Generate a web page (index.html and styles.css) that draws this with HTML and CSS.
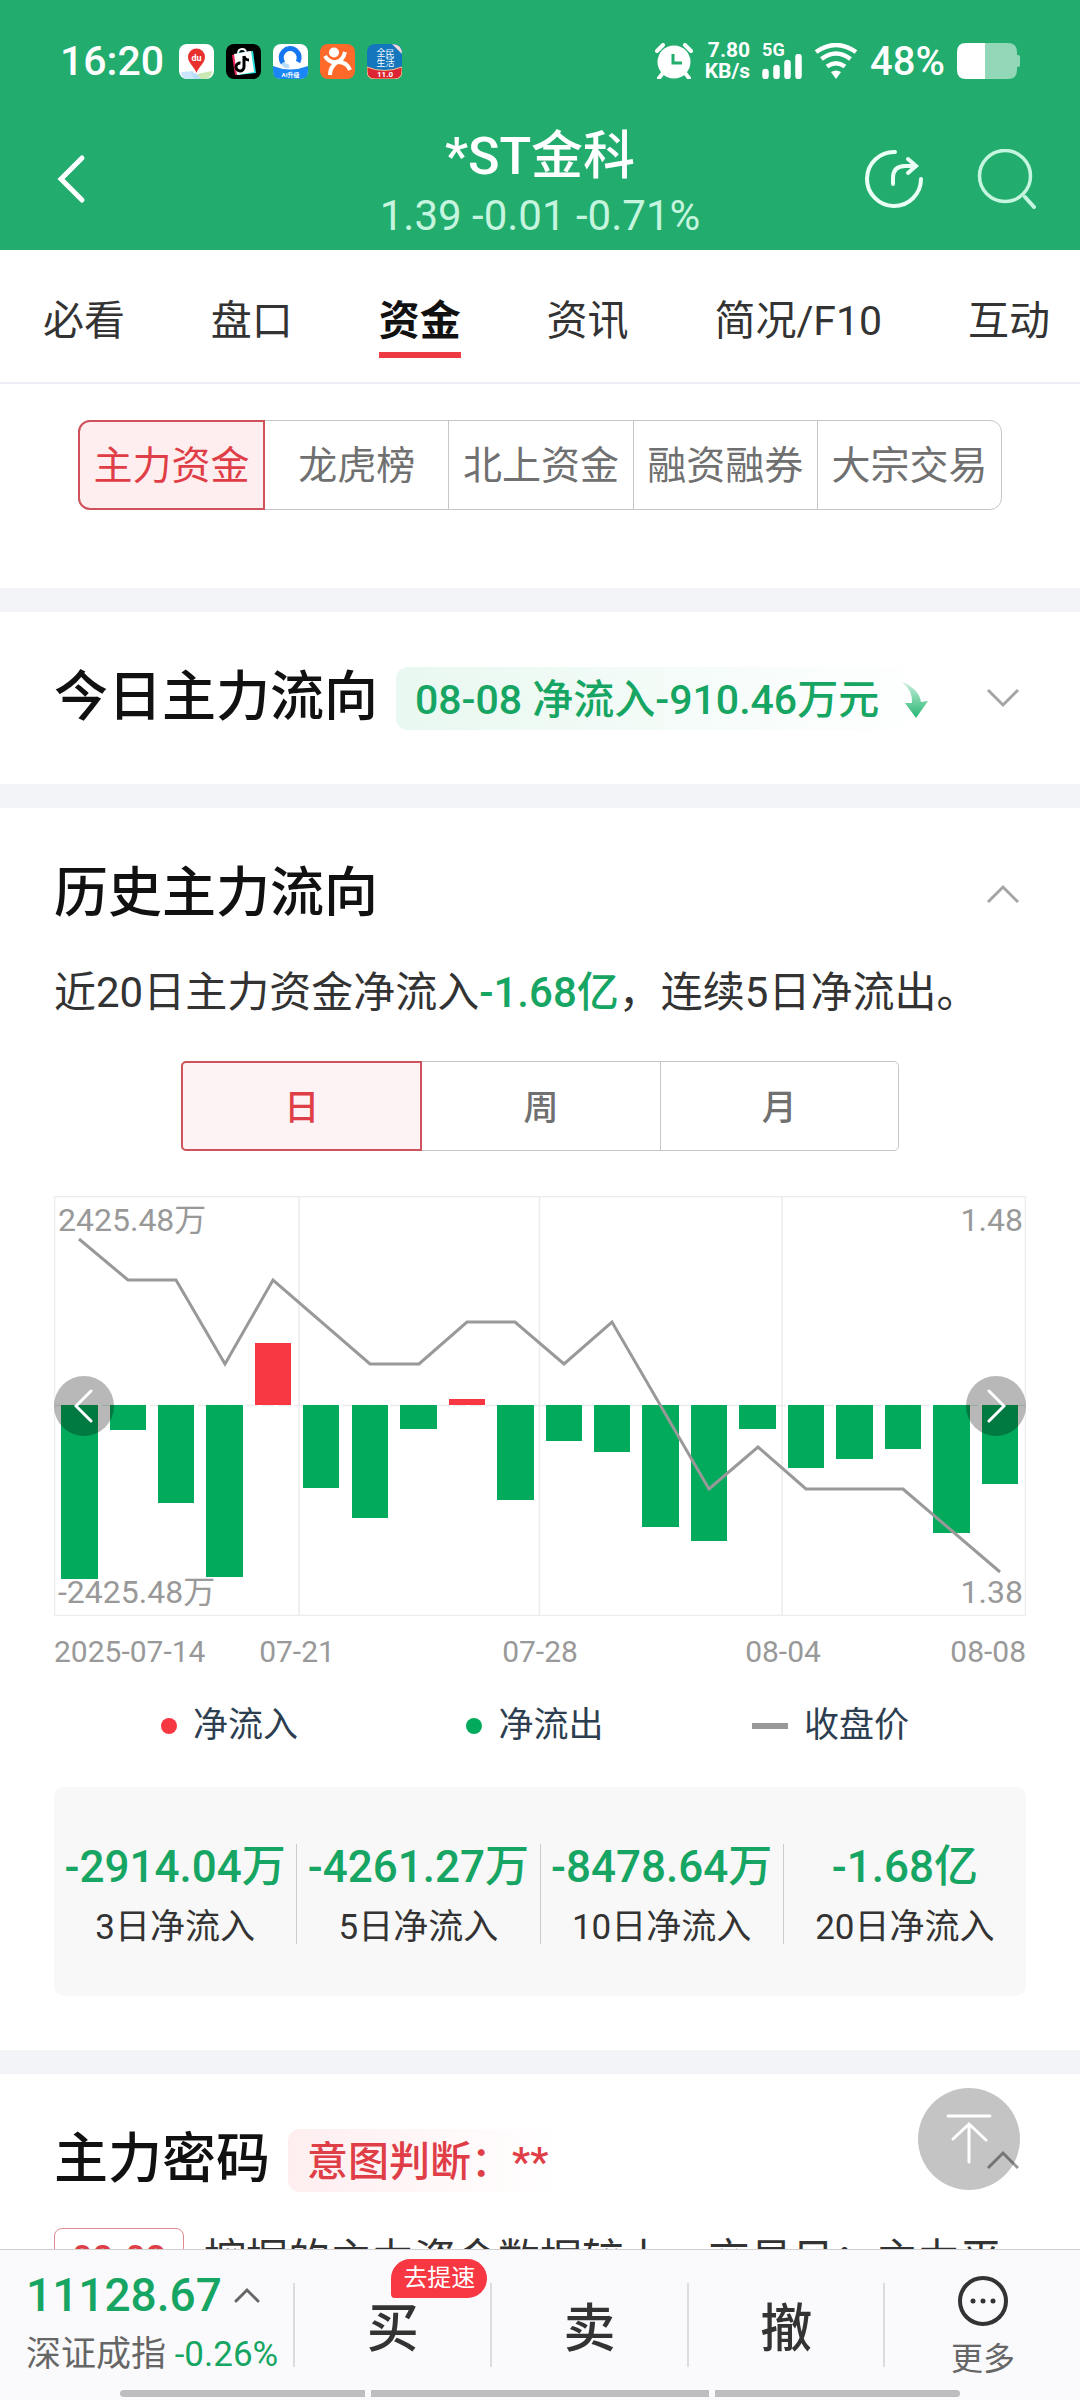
FILE: index.html
```html
<!DOCTYPE html>
<html lang="zh-CN">
<head>
  <meta charset="UTF-8">
  <meta name="viewport" content="width=device-width, initial-scale=1.0">
  <title>*ST金科 资金</title>
  <link rel="stylesheet" href="styles.css">
</head>
<body>
  <div class="app">
    <header class="top">
      <div class="status-bar">
        <span class="clock">16:20</span>
        <div class="notices">
          <svg class="app-icon" viewBox="0 0 35 35">
            <rect width="35" height="35" rx="8" fill="#fff"/>
            <path d="M2 28L14 27 17 35H8Q3 35 2 28Z" fill="#cbe6fa"/>
            <path d="M18 30L33 27Q33 33 27 35H21Z" fill="#c9e8b4"/>
            <path d="M12 28L18 30 22 35H15Z" fill="#b9dcf8"/>
            <path d="M17.500 29C15 22 9 19 9 13A8.500 8.500 0 0 1 26 13C26 19 20 22 17.500 29Z" fill="#e8302f"/>
            <text class="du" x="17.500" y="17" text-anchor="middle">du</text>
          </svg>
          <svg class="app-icon" viewBox="0 0 35 35">
            <rect width="35" height="35" rx="8" fill="#000"/>
            <path d="M12 10Q12 5 16 5T20 9" fill="none" stroke="#fff" stroke-width="2"/>
            <path d="M6 11L24 7 28 28 9 31Z" fill="#f4235c"/>
            <path d="M11 9L27 7 30 29 12 31Z" fill="#2be3e0"/>
            <path d="M8 10L25 7 28 28 11 31Z" fill="#fff"/>
            <path d="M18 12V23A4 4 0 1 1 14.500 19M18 12Q19 16 23 16" fill="none" stroke="#000" stroke-width="3"/>
          </svg>
          <svg class="app-icon" viewBox="0 0 35 35">
            <rect width="35" height="35" rx="8" fill="#fff"/>
            <path d="M0 22Q17 29 35 22V27Q35 35 27 35H8Q0 35 0 27Z" fill="#1b86f5"/>
            <path d="M10 19A9 9 0 1 1 25 18" fill="none" stroke="#1677ee" stroke-width="5"/>
            <path d="M10 19Q12 23 16 22" fill="none" stroke="#b8dcfd" stroke-width="4"/>
            <text class="tiny" x="17.500" y="33" text-anchor="middle">AI升级</text>
          </svg>
          <svg class="app-icon" viewBox="0 0 35 35">
            <rect width="35" height="35" rx="8" fill="#ff6a2b"/>
            <circle cx="14" cy="8.500" r="5" fill="#fff"/>
            <path d="M5 12Q9 19 16 18Q23 17 25 8M17 18Q10 23 10 31M18 18Q27 18 30 26" fill="none" stroke="#fff" stroke-width="4"/>
          </svg>
          <svg class="app-icon" viewBox="0 0 35 35">
            <rect width="35" height="35" rx="8" fill="#1477bd"/>
            <path d="M25 0Q35 0 35 10Z" fill="#f5dada"/>
            <path d="M0 23Q17 30 35 23V27Q35 35 27 35H8Q0 35 0 27Z" fill="#dc2433" stroke="#f6c58b"/>
            <text class="life" x="14" y="12" text-anchor="middle">全</text>
            <text class="life" x="14" y="22" text-anchor="middle">生</text>
            <text class="life" x="23" y="13" text-anchor="middle">民</text>
            <text class="life" x="23" y="22" text-anchor="middle">活</text>
            <text class="ver" x="18" y="33" text-anchor="middle">11.0</text>
          </svg>
        </div>
        <div class="signals">
          <svg width="38" height="36" viewBox="0 0 38 36">
            <circle cx="19" cy="19" r="16.500" fill="#fff"/>
            <path d="M2 8L8 2M36 8L30 2M8 30L4 35M30 30L34 35" stroke="#fff" stroke-width="4" stroke-linecap="round"/>
            <path d="M18 11V20H27" fill="none" stroke="#22ac6e" stroke-width="3"/>
          </svg>
          <div class="speed"><span>7.80</span><span>KB/s</span></div>
          <div class="cell">
            <span>5G</span>
            <svg width="40" height="25" viewBox="0 0 40 25">
              <path d="M3.500 18V22M14.500 14V22M25.500 9V22M36.500 3V22" stroke="#fff" stroke-width="6.500" stroke-linecap="round"/>
            </svg>
          </div>
          <svg width="44" height="36" viewBox="0 0 44 36">
            <path d="M2 9Q22 -5 42 9M7.500 16Q22 5 36.500 16M13 23.500Q22 17 31 23.500" fill="none" stroke="#fff" stroke-width="4.500"/>
            <path d="M17 29Q22 26 27 29L22 36Z" fill="#fff"/>
          </svg>
          <span class="percent">48%</span>
          <svg width="63" height="36" viewBox="0 0 63 36">
            <path d="M28 0H51Q60 0 60 9V12H61Q63 12 63 14V22Q63 24 61 24H60V27Q60 36 51 36H28Z" fill="#92d7b7"/>
            <path d="M28 0H9Q0 0 0 9V27Q0 36 9 36H28Z" fill="#fff"/>
          </svg>
        </div>
      </div>
      <div class="nav-bar">
        <div class="nav-side">
          <button class="icon-btn back" aria-label="返回">
            <svg width="30" height="52" viewBox="0 0 30 52"><path d="M26 5L5 26 26 47" fill="none" stroke="#fff" stroke-width="5" stroke-linecap="round"/></svg>
          </button>
        </div>
        <div class="stock">
          <h1>*ST金科</h1>
          <p>1.39 -0.01 -0.71%</p>
        </div>
        <div class="nav-side nav-actions">
          <button class="icon-btn" aria-label="分享">
            <svg width="60" height="60" viewBox="0 0 60 60">
              <path d="M31 3A27 27 0 1 0 57 30M29 35V29Q29 17 41 17H51M44 10L52 17 44 24" fill="none" stroke="#eafff5" stroke-width="4" stroke-linecap="round"/>
            </svg>
          </button>
          <button class="icon-btn" aria-label="搜索">
            <svg width="60" height="60" viewBox="0 0 60 60">
              <circle cx="29" cy="27" r="25.500" fill="none" stroke="#c5f5de" stroke-width="3.500"/>
              <path d="M49 48L58 58" stroke="#c5f5de" stroke-width="4" stroke-linecap="round"/>
            </svg>
          </button>
        </div>
      </div>
    </header>

    <nav class="tabs">
      <a href="#">必看</a>
      <a href="#">盘口</a>
      <a href="#" class="active">资金</a>
      <a href="#">资讯</a>
      <a href="#">简况/F10</a>
      <a href="#">互动</a>
    </nav>

    <main class="content">
      <section class="filters">
        <div class="segment">
          <button class="active">主力资金</button>
          <button>龙虎榜</button>
          <button>北上资金</button>
          <button>融资融券</button>
          <button>大宗交易</button>
        </div>
      </section>

      <section class="card">
        <div class="card-head">
          <h2>今日主力流向</h2>
          <span class="pill down">08-08 净流入-910.46万元
            <svg width="28" height="36" viewBox="0 0 28 36">
              <defs>
                <linearGradient id="fall" x1="0" y1="0" x2="0" y2="1">
                  <stop offset="0" stop-color="#c9efdb"/>
                  <stop offset="1" stop-color="#25b673"/>
                </linearGradient>
              </defs>
              <path d="M1 0Q18 7 20 20L27 19 15 36 4 21 11 21Q12 9 1 0Z" fill="url(#fall)"/>
            </svg>
          </span>
          <button class="toggle" aria-label="展开">
            <svg width="34" height="20" viewBox="0 0 34 20"><path d="M2 2L17 17 32 2"/></svg>
          </button>
        </div>
      </section>

      <section class="card history">
        <div class="card-head">
          <h2>历史主力流向</h2>
          <button class="toggle" aria-label="收起">
            <svg width="34" height="20" viewBox="0 0 34 20"><path d="M2 18L17 3 32 18"/></svg>
          </button>
        </div>
        <p class="summary">近20日主力资金净流入<strong>-1.68亿</strong>，连续5日净流出。</p>

        <div class="segment period">
          <button class="active">日</button>
          <button>周</button>
          <button>月</button>
        </div>

        <div class="chart">
          <svg class="plot" viewBox="0 0 972 420">
            <path class="grid" d="M.5 .5H971.500V419.500H.5ZM245 0V420M485.500 0V420M728 0V420"/>
            <path class="zero" d="M0 209.500H972"/>
            <g class="out">
              <rect x="7" y="209" width="37" height="174"/>
              <rect x="56" y="209" width="36" height="25"/>
              <rect x="104" y="209" width="36" height="98"/>
              <rect x="152" y="209" width="37" height="172"/>
              <rect x="249" y="209" width="36" height="83"/>
              <rect x="298" y="209" width="36" height="113"/>
              <rect x="346" y="209" width="37" height="24"/>
              <rect x="443" y="209" width="37" height="95"/>
              <rect x="492" y="209" width="36" height="36"/>
              <rect x="540" y="209" width="36" height="47"/>
              <rect x="588" y="209" width="37" height="122"/>
              <rect x="637" y="209" width="36" height="136"/>
              <rect x="685" y="209" width="37" height="24"/>
              <rect x="734" y="209" width="36" height="63"/>
              <rect x="782" y="209" width="37" height="54"/>
              <rect x="831" y="209" width="36" height="44"/>
              <rect x="879" y="209" width="37" height="128"/>
              <rect x="928" y="209" width="36" height="79"/>
            </g>
            <g class="in">
              <rect x="201" y="147" width="36" height="62"/>
              <rect x="395" y="203" width="36" height="6"/>
            </g>
            <polyline class="price" points="25,43 74,84 122,84 171,168 219,84 316,168 365,168 413,126 461,126 510,168 558,126 655,293 704,251 752,293 849,293 946,376"/>
          </svg>
          <span class="axis top-left">2425.48万</span>
          <span class="axis top-right">1.48</span>
          <span class="axis bottom-left">-2425.48万</span>
          <span class="axis bottom-right">1.38</span>
          <button class="pager prev" aria-label="上一页">
            <svg width="20" height="34" viewBox="0 0 20 34"><path d="M17 2L2 17 17 32"/></svg>
          </button>
          <button class="pager next" aria-label="下一页">
            <svg width="20" height="34" viewBox="0 0 20 34"><path d="M3 2L18 17 3 32"/></svg>
          </button>
        </div>
        <div class="dates">
          <span>2025-07-14</span>
          <span>07-21</span>
          <span>07-28</span>
          <span>08-04</span>
          <span>08-08</span>
        </div>
        <div class="legend">
          <span class="legend-item"><span class="mark"><i class="dot red"></i></span>净流入</span>
          <span class="legend-item"><span class="mark"><i class="dot green"></i></span>净流出</span>
          <span class="legend-item"><span class="mark"><i class="dash"></i></span>收盘价</span>
        </div>

        <div class="stats">
          <div class="stat"><strong>-2914.04万</strong><span>3日净流入</span></div>
          <div class="stat"><strong>-4261.27万</strong><span>5日净流入</span></div>
          <div class="stat"><strong>-8478.64万</strong><span>10日净流入</span></div>
          <div class="stat"><strong>-1.68亿</strong><span>20日净流入</span></div>
        </div>
      </section>

      <section class="card">
        <div class="card-head">
          <h2>主力密码</h2>
          <span class="pill up">意图判断：**</span>
          <button class="toggle dark" aria-label="收起">
            <svg width="34" height="20" viewBox="0 0 34 20"><path d="M2 18L17 3 32 18"/></svg>
          </button>
        </div>
        <div class="note">
          <span class="tag">08-08</span>
          <p>挖掘的主力资金数据较上一交易日：主力平</p>
        </div>
      </section>
    </main>

    <footer class="trade-bar">
      <button class="to-top" aria-label="回到顶部">
        <svg width="46" height="52" viewBox="0 0 46 52"><path d="M2 3H44M23 49V11M7 26L23 11 40 27" fill="none" stroke="#fff" stroke-width="3" stroke-linecap="round"/></svg>
      </button>
      <div class="actions">
        <a href="#" class="index">
          <span class="index-price">11128.67
            <svg width="26" height="16" viewBox="0 0 26 16"><path d="M2 14L13 3 24 14" fill="none" stroke="#666" stroke-width="3" stroke-linecap="round"/></svg>
          </span>
          <span class="index-name">深证成指 <em>-0.26%</em></span>
        </a>
        <button class="action">买<span class="badge">去提速</span></button>
        <button class="action">卖</button>
        <button class="action">撤</button>
        <button class="action more">
          <svg width="50" height="52" viewBox="0 0 50 52">
            <circle cx="25" cy="26" r="23" fill="none" stroke="#333" stroke-width="4"/>
            <circle cx="15" cy="26" r="2.500" fill="#333"/><circle cx="25" cy="26" r="2.500" fill="#333"/><circle cx="35" cy="26" r="2.500" fill="#333"/>
          </svg>
          更多
        </button>
      </div>
      <div class="home-bar"><i></i><i class="wide"></i><i></i></div>
    </footer>
  </div>
</body>
</html>
```
FILE: styles.css
```css
* {
  box-sizing: border-box;
}
body {
  margin: 0;
  font-family: Roboto, "Noto Sans CJK SC", sans-serif;
  color: #333;
  background: #fff;
}
h1, h2, p {
  margin: 0;
}
h1, h2, strong {
  font-weight: 500;
}
em, i {
  font-style: normal;
}
a {
  color: inherit;
  text-decoration: none;
}
button {
  margin: 0;
  padding: 0;
  border: 0;
  background: none;
  font-family: inherit;
  color: inherit;
}
svg {
  display: block;
  flex: none;
}
.app {
  display: flex;
  flex-direction: column;
  height: 100vh;
}

/* header */
.top {
  flex: none;
  color: #fff;
  background: #22ac6e;
}
.status-bar {
  display: flex;
  align-items: center;
  padding: 36px 60px 0;
  height: 86px;
}
.clock {
  font-size: 41px;
  font-weight: 500;
}
.notices {
  display: flex;
  gap: 12px;
  margin-left: 15px;
}
.app-icon {
  width: 35px;
  height: 35px;
}
.app-icon text {
  fill: #fff;
  font-weight: 700;
}
.du {
  font-size: 9px;
}
.tiny {
  font-size: 6px;
}
.app-icon .life {
  font-size: 9px;
  font-weight: 400;
}
.ver {
  font-size: 8px;
}
.signals {
  display: flex;
  align-items: center;
  gap: 12px;
  margin-left: auto;
}
.speed {
  display: flex;
  flex-direction: column;
  align-items: flex-end;
  font-size: 21px;
  line-height: 21px;
  font-weight: 700;
}
.cell {
  display: flex;
  flex-direction: column;
  font-size: 18px;
  line-height: 14px;
  font-weight: 700;
}
.cell svg {
  margin-top: -3px;
}
.percent {
  font-size: 40px;
  font-weight: 500;
}
.nav-bar {
  display: flex;
  align-items: center;
  height: 164px;
  padding: 22px 44px 0;
}
.nav-side {
  flex: 1;
  display: flex;
}
.back {
  padding-left: 12px;
}
.nav-actions {
  justify-content: flex-end;
  gap: 52px;
}
.stock {
  padding-top: 10px;
  text-align: center;
}
.stock h1 {
  font-size: 52px;
  line-height: 64px;
}
.stock p {
  font-size: 42px;
  line-height: 54px;
  color: #c5f5de;
}

/* page tabs */
.tabs {
  flex: none;
  display: flex;
  justify-content: space-between;
  padding: 40px 30px 24px 43px;
  border-bottom: 2px solid #eeeef8;
  font-size: 41px;
  line-height: 62px;
}
.tabs a {
  border-bottom: 6px solid transparent;
}
.tabs .active {
  font-weight: 700;
  color: #111;
  border-color: #ed3a43;
}

.content {
  flex: 1;
  min-height: 0;
  overflow: hidden;
}
.filters {
  padding: 36px 78px 78px;
}
.segment {
  display: flex;
  border: 1px solid #c6c6c6;
  border-radius: 12px;
}
.segment button {
  flex: 1;
  height: 88px;
  padding-bottom: 6px;
  font-size: 39px;
  color: #707070;
  white-space: nowrap;
}
.segment button + button {
  border-left: 1px solid #c6c6c6;
}
.segment .active {
  margin: -1px 0 -1px -1px;
  height: 90px;
  border: 2px solid #cf525a;
  border-radius: 12px 0 0 12px;
  color: #e03e47;
  background: #feeef0;
}
.segment .active + button {
  border-left: 0;
}
.period {
  margin: 36px 127px 45px;
  border-radius: 5px;
}
.period button {
  padding-bottom: 4px;
  font-size: 35px;
  font-weight: 500;
}
.period .active {
  border-radius: 5px 0 0 5px;
  background: #fdf2f4;
}

/* cards */
.card {
  padding: 51px 54px;
  border-top: 24px solid #f3f4f8;
}
.card-head {
  display: flex;
  align-items: center;
  min-height: 69px;
}
.card-head h2 {
  font-size: 54px;
  line-height: 70px;
  color: #111;
}
.pill {
  display: flex;
  align-items: center;
  gap: 22px;
  margin-left: 18px;
  padding: 3px 12px 0 19px;
  border-radius: 12px;
  font-size: 41px;
  line-height: 60px;
  font-weight: 500;
}
.pill.down {
  color: #16a562;
  background: linear-gradient(90deg, #e9f8f1, #fff);
}
.pill.up {
  color: #e03e47;
  background: linear-gradient(90deg, #feeef0, #fff);
}
.toggle {
  margin-left: auto;
  padding: 10px 6px;
}
.toggle path {
  fill: none;
  stroke: #a5a5a5;
  stroke-width: 3px;
}
.toggle.dark path {
  stroke: #999;
}
.summary {
  margin-top: 32px;
  font-size: 42px;
  line-height: 64px;
}
.summary strong {
  color: #16a562;
}
.history {
  padding-bottom: 54px;
}

/* flow chart */
.chart {
  position: relative;
}
.plot {
  width: 100%;
}
.grid, .zero {
  fill: none;
  stroke: #ececec;
  stroke-width: 1.5px;
}
.zero {
  stroke-dasharray: 12 4;
}
.out {
  fill: #02aa5c;
}
.in {
  fill: #f73742;
}
.price {
  fill: none;
  stroke: #999;
  stroke-width: 3px;
}
.axis {
  position: absolute;
  font-size: 32px;
  line-height: 40px;
  color: #999;
}
.top-left {
  top: 4px;
  left: 4px;
}
.top-right {
  top: 4px;
  right: 3px;
}
.bottom-left {
  bottom: 4px;
  left: 4px;
}
.bottom-right {
  bottom: 4px;
  right: 3px;
}
.pager {
  position: absolute;
  top: 50%;
  display: flex;
  align-items: center;
  justify-content: center;
  width: 60px;
  height: 60px;
  margin-top: -30px;
  border-radius: 50%;
  background: rgba(0, 0, 0, 0.28);
}
.pager path {
  fill: none;
  stroke: #fff;
  stroke-width: 3px;
  stroke-linecap: round;
}
.prev {
  left: 0;
}
.next {
  right: 0;
}
.dates {
  display: grid;
  grid-template-columns: 1fr 2fr 2fr 2fr 1fr;
  margin-top: 16px;
  font-size: 30px;
  line-height: 40px;
  text-align: center;
  white-space: nowrap;
  color: #999;
}
.dates span:first-child {
  width: 0;
}
.dates span:last-child {
  text-align: right;
}
.legend {
  display: flex;
  justify-content: space-between;
  padding: 0 117px 0 87px;
  margin-top: 30px;
  font-size: 35px;
  line-height: 48px;
  color: #2c3e50;
}
.legend-item {
  display: flex;
  align-items: center;
}
.mark {
  display: flex;
  justify-content: flex-end;
  width: 36px;
  margin-right: 16px;
}
.dot {
  width: 16px;
  height: 16px;
  border-radius: 50%;
}
.red {
  background: #f73742;
}
.green {
  background: #02aa5c;
}
.dash {
  width: 36px;
  height: 6px;
  background: #999;
}
.stats {
  display: flex;
  margin-top: 37px;
  padding: 57px 0 52px;
  border-radius: 10px;
  background: #f8f8f8;
}
.stat {
  flex: 1 1 0;
  text-align: center;
}
.stat + .stat {
  border-left: 1px solid #ccc;
}
.stat strong, .stat span {
  display: block;
  white-space: nowrap;
}
.stat strong {
  margin-bottom: 22px;
  font-size: 44px;
  line-height: 46px;
  color: #16a562;
}
.stat span {
  font-size: 35px;
  line-height: 32px;
}
.note {
  display: flex;
  gap: 20px;
  margin-top: 33px;
  font-size: 42px;
  line-height: 64px;
}
.note p {
  flex: 1;
  white-space: nowrap;
}
.tag {
  padding: 0 17px;
  border: 1px solid #e08a90;
  border-radius: 8px;
  font-size: 36px;
  line-height: 60px;
  font-weight: 500;
  color: #e03e47;
}

/* bottom bar */
.trade-bar {
  position: relative;
  flex: none;
  border-top: 1px solid #d0d0d2;
  background: #fafafc;
}
.to-top {
  position: absolute;
  right: 60px;
  bottom: 210px;
  display: flex;
  align-items: center;
  justify-content: center;
  width: 102px;
  height: 102px;
  border-radius: 50%;
  background: rgba(0, 0, 0, 0.23);
}
.actions {
  display: flex;
  height: 140px;
}
.index {
  display: flex;
  flex-direction: column;
  justify-content: center;
  width: 293px;
  padding: 12px 0 0 26px;
  white-space: nowrap;
}
.index-price {
  display: flex;
  align-items: center;
  gap: 12px;
  font-size: 46px;
  line-height: 58px;
  font-weight: 500;
  color: #16a562;
}
.index-name {
  font-size: 35px;
  line-height: 62px;
  color: #666;
}
.index-name em {
  color: #16a562;
}
.action {
  position: relative;
  flex: 1;
  padding: 8px 0 0 3px;
  font-size: 52px;
  font-weight: 500;
}
/* short divider on the left edge of each action */
.action::before {
  content: "";
  position: absolute;
  left: 0;
  top: 33px;
  width: 2px;
  height: 84px;
  background: #dcdcdc;
}
.badge {
  position: absolute;
  left: 50%;
  top: 9px;
  padding: 0 12px;
  border-radius: 20px 20px 20px 4px;
  font-size: 24px;
  line-height: 39px;
  font-weight: 400;
  white-space: nowrap;
  color: #fff;
  background: #f73742;
}
.more {
  display: flex;
  flex-direction: column;
  align-items: center;
  padding-top: 25px;
  font-size: 32px;
  font-weight: 400;
  line-height: 64px;
  color: #666;
}
.home-bar {
  display: flex;
  gap: 6px;
  padding: 0 120px 3px;
}
.home-bar i {
  flex: 245;
  height: 7px;
  background: #bdbdbf;
}
.home-bar .wide {
  flex: 338;
}
.home-bar i:first-child {
  border-radius: 4px 0 0 4px;
}
.home-bar i:last-child {
  border-radius: 0 4px 4px 0;
}
```
